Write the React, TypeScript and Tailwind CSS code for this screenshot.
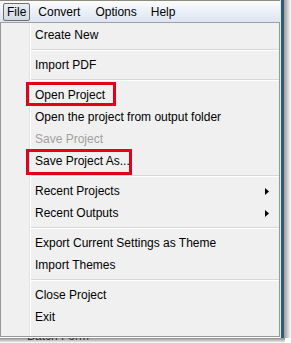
import React from "react";

type Item =
  | { type: "item"; label: string; disabled?: boolean; sub?: boolean }
  | { type: "sep" };

const items: Item[] = [
  { type: "item", label: "Create New" },
  { type: "sep" },
  { type: "item", label: "Import PDF" },
  { type: "sep" },
  { type: "item", label: "Open Project" },
  { type: "item", label: "Open the project from output folder" },
  { type: "item", label: "Save Project", disabled: true },
  { type: "item", label: "Save Project As..." },
  { type: "sep" },
  { type: "item", label: "Recent Projects", sub: true },
  { type: "item", label: "Recent Outputs", sub: true },
  { type: "sep" },
  { type: "item", label: "Export Current Settings as Theme" },
  { type: "item", label: "Import Themes" },
  { type: "sep" },
  { type: "item", label: "Close Project" },
  { type: "item", label: "Exit" },
];

export default function App() {
  return (
    <div
      className="relative w-[291px] h-[343px] bg-white overflow-hidden text-[12px] text-black"
      style={{ fontFamily: '"Liberation Sans", sans-serif' }}
    >
      <div className="flex h-[338px]">
        <div className="w-[280px] flex flex-col">
          <div className="h-[22px] border-t border-[#8c8c7c] bg-gradient-to-b from-[#fbfcfe] to-[#dce5f2] flex items-center pl-[3px]">
            <div className="h-[18px] px-[3px] flex items-center border border-[#6e6e6e] rounded-[2px] bg-gradient-to-b from-[#e9eef5] to-[#d3dbe7]">
              File
            </div>
            <div className="ml-[8px]">Convert</div>
            <div className="ml-[15px]">Options</div>
            <div className="ml-[14px]">Help</div>
          </div>
          <div className="relative flex-1 flex flex-col">
            <div className="relative flex-1 flex bg-[#f0f0f0] border border-[#979797] border-t-[#a0a0a0]">
              <div className="w-[29px] border-r border-[#e2e3e3] shadow-[1px_0_0_#ffffff]" />
              <div className="flex-1 flex flex-col pt-[1px] pl-[1px]">
                {items.map((it, i) =>
                  it.type === "sep" ? (
                    <div key={i} className="h-[8px] flex items-center">
                      <div className="w-full h-[2px] border-t border-[#d7d7d7] border-b border-b-white" />
                    </div>
                  ) : (
                    <div
                      key={i}
                      className={`h-[22px] flex items-center pl-[4px] pr-[10px] ${
                        it.disabled ? "text-[#a0a0a0]" : "text-black"
                      }`}
                    >
                      <span className="flex-1 leading-none">{it.label}</span>
                      {it.sub && (
                        <svg width="4" height="7" viewBox="0 0 4 7">
                          <path d="M0 0 L4 3.5 L0 7 Z" fill="#000" />
                        </svg>
                      )}
                    </div>
                  )
                )}
              </div>
              <div className="absolute left-[25px] top-[59px] w-[90px] h-[24px] border-[3px] border-[#e3001b]" />
              <div className="absolute left-[25px] top-[126px] w-[106px] h-[26px] border-[3px] border-[#e3001b]" />
            </div>
            <div className="h-[1px]" />
          </div>
        </div>
        <div className="w-[1px] bg-[#e4e4e4]" />
        <div className="w-[3px] bg-[#2e5d78]" />
        <div className="flex-1 bg-gradient-to-r from-[#9a9a9a] to-white" />
      </div>
      <div className="h-[5px] bg-gradient-to-b from-[#8f8f8f] to-white overflow-hidden relative w-[285px]">
        <div className="absolute left-[27px] -top-[9px] text-[12px] leading-[14px] text-[#333]">Batch Form</div>
      </div>
    </div>
  );
}
